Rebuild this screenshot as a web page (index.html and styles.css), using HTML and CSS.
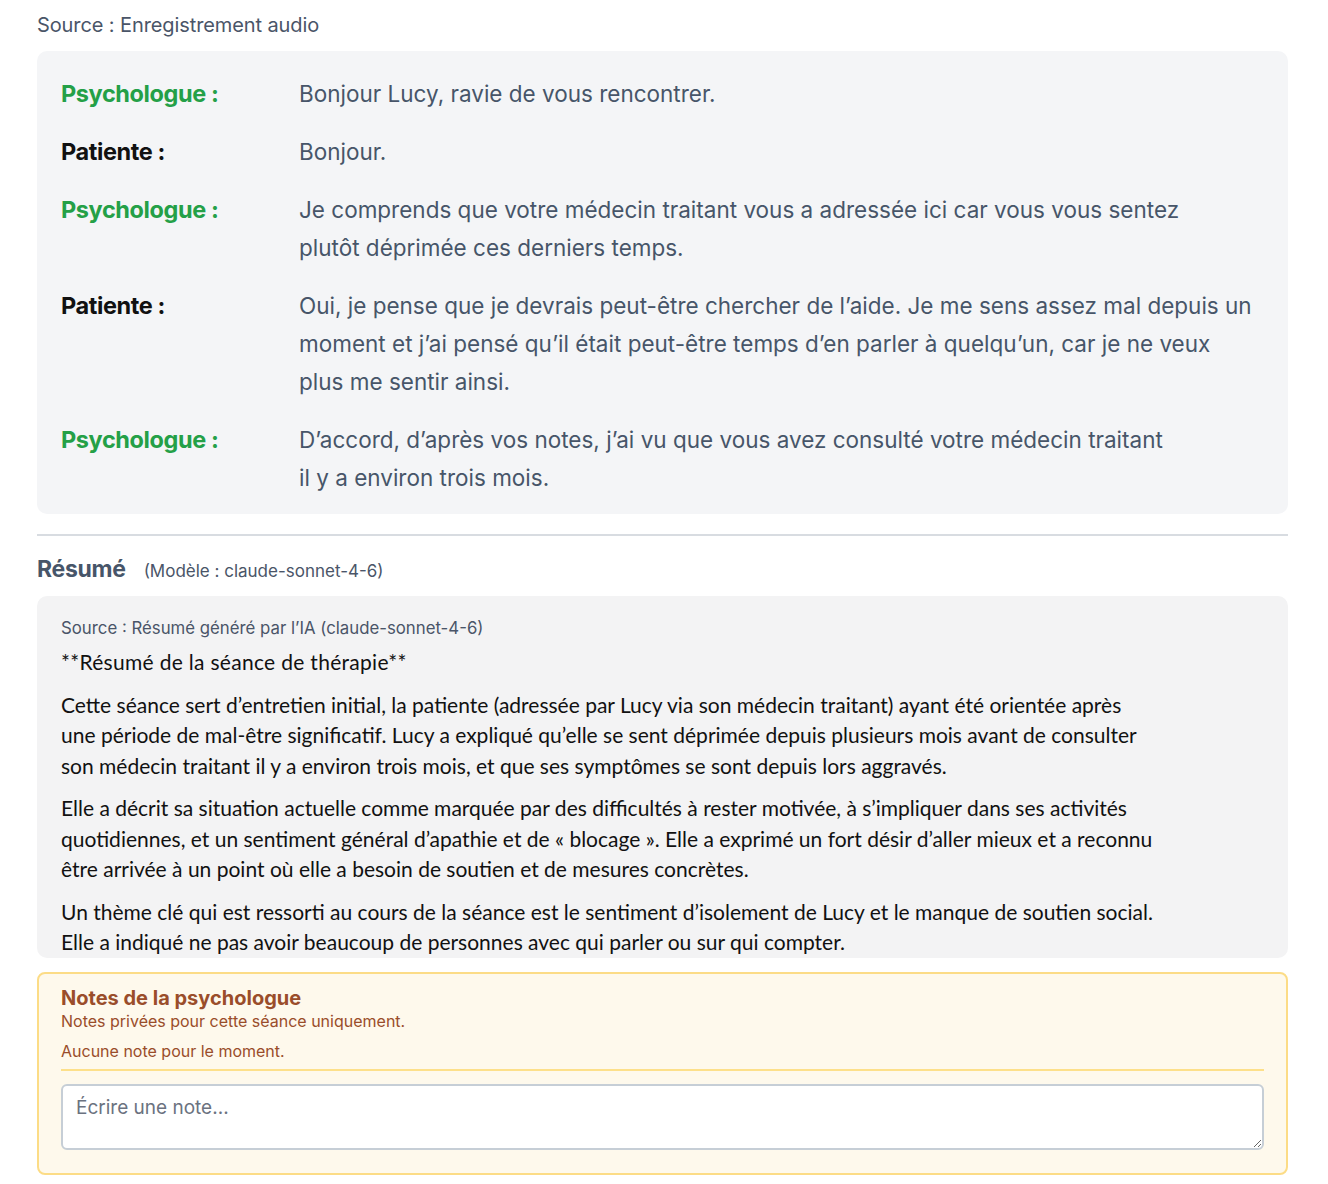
FILE: index.html
```html
<!DOCTYPE html>
<html lang="fr">
<head>
<meta charset="utf-8">
<title>Séance – Lucy</title>
<link rel="stylesheet" href="styles.css">
</head>
<body>
<main class="session">
  <p class="source">Source : Enregistrement audio</p>

  <section class="transcript">
    <div class="turn">
      <span class="speaker speaker--psy">Psychologue :</span>
      <p class="utterance">Bonjour Lucy, ravie de vous rencontrer.</p>
    </div>
    <div class="turn">
      <span class="speaker speaker--patient">Patiente :</span>
      <p class="utterance">Bonjour.</p>
    </div>
    <div class="turn">
      <span class="speaker speaker--psy">Psychologue :</span>
      <p class="utterance">Je comprends que votre médecin traitant vous a adressée ici car vous vous sentez<br>plutôt déprimée ces derniers temps.</p>
    </div>
    <div class="turn">
      <span class="speaker speaker--patient">Patiente :</span>
      <p class="utterance">Oui, je pense que je devrais peut-être chercher de l’aide. Je me sens assez mal depuis un<br>moment et j’ai pensé qu’il était peut-être temps d’en parler à quelqu’un, car je ne veux<br>plus me sentir ainsi.</p>
    </div>
    <div class="turn">
      <span class="speaker speaker--psy">Psychologue :</span>
      <p class="utterance">D’accord, d’après vos notes, j’ai vu que vous avez consulté votre médecin traitant<br>il y a environ trois mois.</p>
    </div>
  </section>

  <hr class="divider">

  <h2 class="summary-title">Résumé <span class="summary-model">(Modèle : claude-sonnet-4-6)</span></h2>

  <section class="summary">
    <p class="summary-source">Source : Résumé généré par l’IA (claude-sonnet-4-6)</p>
    <div class="summary-body">
      <p class="summary-heading">**Résumé de la séance de thérapie**</p>
      <p>Cette séance sert d’entretien initial, la patiente (adressée par Lucy via son médecin traitant) ayant été orientée après une période de mal-être significatif. Lucy a expliqué qu’elle se sent déprimée depuis plusieurs mois avant de consulter son médecin traitant il y a environ trois mois, et que ses symptômes se sont depuis lors aggravés.</p>
      <p>Elle a décrit sa situation actuelle comme marquée par des difficultés à rester motivée, à s’impliquer dans ses activités quotidiennes, et un sentiment général d’apathie et de « blocage ». Elle a exprimé un fort désir d’aller mieux et a reconnu être arrivée à un point où elle a besoin de soutien et de mesures concrètes.</p>
      <p>Un thème clé qui est ressorti au cours de la séance est le sentiment d’isolement de Lucy et le manque de soutien social. Elle a indiqué ne pas avoir beaucoup de personnes avec qui parler ou sur qui compter.</p>
    </div>
  </section>

  <section class="notes">
    <h3 class="notes-title">Notes de la psychologue</h3>
    <p class="notes-hint">Notes privées pour cette séance uniquement.</p>
    <p class="notes-empty">Aucune note pour le moment.</p>
    <textarea class="notes-input" placeholder="Écrire une note..."></textarea>
  </section>
</main>
</body>
</html>
```
FILE: styles.css
```css
* { box-sizing: border-box; }

body {
  margin: 0;
  background: #ffffff;
  font-family: Inter, "Liberation Sans", sans-serif;
  color: #475569;
}

.session {
  width: 1251px;
  margin-left: 37px;
  padding-top: 12px;
}

.source {
  margin: 0 0 13px;
  font-size: 20px;
  line-height: 26px;
  color: #4a5568;
  letter-spacing: -0.1px;
}

/* Transcript */
.transcript {
  background: #f4f5f7;
  border-radius: 10px;
  padding: 24px 24px 17px;
  display: flex;
  flex-direction: column;
  gap: 20px;
}

.turn {
  display: grid;
  grid-template-columns: 238px 1fr;
  align-items: start;
}

.speaker {
  font-size: 23.5px;
  line-height: 38px;
  font-weight: 700;
  letter-spacing: -0.4px;
}
.speaker--psy { color: #24a047; }
.speaker--patient { color: #111111; }

.utterance {
  margin: 0;
  font-size: 22.5px;
  line-height: 38px;
  color: #475569;
}

.divider {
  border: 0;
  border-top: 2px solid #d8dce1;
  margin: 20px 0 18px;
}

/* Summary */
.summary-title {
  display: flex;
  align-items: baseline;
  gap: 18px;
  margin: 0 0 10px;
  font-size: 23px;
  line-height: 30px;
  font-weight: 700;
  letter-spacing: -0.3px;
  color: #475569;
}
.summary-model {
  font-size: 17px;
  line-height: 30px;
  font-weight: 400;
  letter-spacing: 0;
  color: #4a5568;
}

.summary {
  background: #f3f3f4;
  border-radius: 10px;
  padding: 20px 24px 0;
  max-height: 362px;
  overflow: hidden;
}

.summary-source {
  margin: 0 0 7px;
  font-size: 16.8px;
  line-height: 24px;
  color: #4a5568;
}

.summary-body {
  max-width: 1100px;
  font-family: Lato, "Noto Sans", sans-serif;
  font-size: 21px;
  line-height: 30.5px;
  color: #111111;
}
.summary-body p { margin: 0 0 12px; }
.summary-body .summary-heading { letter-spacing: 0.3px; }

/* Notes */
.notes {
  margin-top: 14px;
  background: #fef9ec;
  border: 2px solid #fcdc86;
  border-radius: 8px;
  padding: 12px 22px 23px;
  color: #9a4d2a;
}

.notes-title {
  margin: 0;
  font-size: 20px;
  line-height: 24px;
  font-weight: 700;
}

.notes-hint,
.notes-empty {
  margin: 0;
  font-size: 16px;
  line-height: 22px;
}
.notes-empty {
  margin-top: 8px;
  padding-bottom: 7px;
  border-bottom: 2px solid #fde08a;
}

.notes-input {
  display: block;
  width: 100%;
  height: 66px;
  margin-top: 13px;
  padding: 10px 13px;
  border: 2px solid #c6ced6;
  border-radius: 6px;
  background: #ffffff;
  font-family: Inter, "Liberation Sans", sans-serif;
  font-size: 19px;
  color: #333;
  resize: vertical;
}
.notes-input::placeholder { color: #6b7280; }
```
